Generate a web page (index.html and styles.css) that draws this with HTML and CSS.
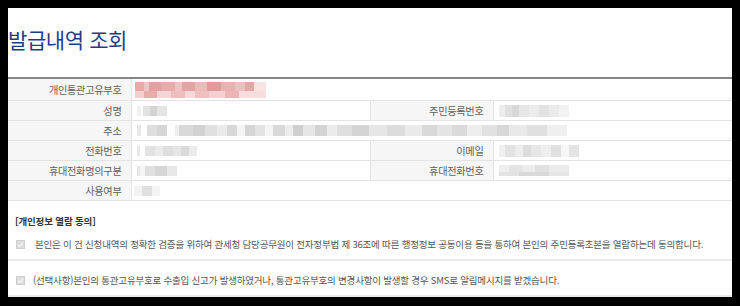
FILE: index.html
```html
<!DOCTYPE html>
<html lang="ko">
<head>
<meta charset="utf-8">
<title>발급내역 조회</title>
<link rel="stylesheet" href="styles.css">
</head>
<body>
<div class="page">
  <h1 class="title">발급내역 조회</h1>
  <table class="info">
    <colgroup>
      <col class="c-label"><col class="c-value"><col class="c-label"><col class="c-value">
    </colgroup>
    <tr class="first">
      <th>개인통관고유부호</th>
      <td colspan="3"><span class="blur b-id"></span></td>
    </tr>
    <tr>
      <th>성명</th>
      <td><span class="blur b-name"></span></td>
      <th>주민등록번호</th>
      <td><span class="blur b-rrn"></span></td>
    </tr>
    <tr>
      <th>주소</th>
      <td colspan="3"><span class="blur b-addr"></span></td>
    </tr>
    <tr>
      <th>전화번호</th>
      <td><span class="blur b-tel"></span></td>
      <th>이메일</th>
      <td><span class="blur b-mail"></span></td>
    </tr>
    <tr>
      <th>휴대전화명의구분</th>
      <td><span class="blur b-owner"></span></td>
      <th>휴대전화번호</th>
      <td><span class="blur b-mobile"></span></td>
    </tr>
    <tr>
      <th>사용여부</th>
      <td colspan="3"><span class="blur b-use"></span></td>
    </tr>
  </table>

  <div class="consent">
    <div class="consent-title">[개인정보 열람 동의]</div>
    <div class="consent-item item-1">
      <svg class="chk" width="9" height="9" viewBox="0 0 9 9" aria-hidden="true">
        <rect x="0.5" y="0.5" width="8" height="8" fill="#dedede" stroke="#cfcfcf"/>
        <path d="M2 4.6 L3.8 6.4 L7 2.6" fill="none" stroke="#f7f7f7" stroke-width="1.3"/>
      </svg>
      <span class="consent-text">본인은 이 건 신청내역의 정확한 검증을 위하여 관세청 담당공무원이 전자정부법 제 36조에 따른 행정정보 공동이용 등을 통하여 본인의 주민등록초본을 열람하는데 동의합니다.</span>
    </div>
    <div class="consent-item item-2">
      <svg class="chk" width="9" height="9" viewBox="0 0 9 9" aria-hidden="true">
        <rect x="0.5" y="0.5" width="8" height="8" fill="#dedede" stroke="#cfcfcf"/>
        <path d="M2 4.6 L3.8 6.4 L7 2.6" fill="none" stroke="#f7f7f7" stroke-width="1.3"/>
      </svg>
      <span class="consent-text">(선택사항)본인의 통관고유부호로 수출입 신고가 발생하였거나, 통관고유부호의 변경사항이 발생할 경우 SMS로 알림메시지를 받겠습니다.</span>
    </div>
  </div>
</div>
</body>
</html>
```

FILE: styles.css
```css
html, body {
  margin: 0;
  padding: 0;
  background: #000;
}

body {
  padding: 8px 8px 9px 8px;
  font-family: "Noto Sans CJK KR", "Noto Sans", sans-serif;
}

.page {
  width: 724px;
  height: 289px;
  background: #fff;
  overflow: hidden;
}

.title {
  margin: 0;
  padding: 16px 0 23px 0;
  height: 30px;
  line-height: 30px;
  font-size: 21px;
  font-weight: 400;
  letter-spacing: -0.4px;
  color: #1f3d87;
  white-space: nowrap;
}

.info {
  width: 724px;
  table-layout: fixed;
  border-collapse: collapse;
  border-top: 2px solid #868686;
}

.c-label { width: 123px; }
.c-value { width: 239px; }

.info th,
.info td {
  height: 19px;
  padding: 0;
  border-bottom: 1px solid #e4e4e4;
  vertical-align: middle;
}

.info tr.first th,
.info tr.first td {
  height: 21px;
}

.info th {
  background: #f6f6f6;
  border-right: 1px solid #e4e4e4;
  text-align: right;
  padding-right: 9px;
  font-size: 10.2px;
  font-weight: 400;
  letter-spacing: -0.3px;
  color: #5f5f5f;
  white-space: nowrap;
}

.info td {
  padding-left: 5px;
  border-right: 1px solid #e4e4e4;
}

.info td:last-child {
  border-right: none;
}

.blur {
  display: block;
  height: 10px;
}

.b-id {
  width: 131px;
  height: 16px;
  margin-left: -2px;
  background:
    linear-gradient(90deg, #eaa8a8 0 9px, #f1c5c5 9px 14px, #e6a0a0 14px 26px, #e9abab 26px 40px, #f0c2c2 40px 47px, #e7a3a3 47px 60px, #eeb9b9 60px 72px, #e39a9a 72px 86px, #ebb0b0 86px 100px, #f0c0c0 100px 110px, #e8a5a5 110px 119px, #f8e3e3 119px 131px) top / 100% 9px no-repeat,
    linear-gradient(90deg, #f3cfcf 0 9px, #e9acac 9px 22px, #f5d6d6 22px 36px, #eebdbd 36px 50px, #f6d9d9 50px 60px, #efc0c0 60px 74px, #f4d0d0 74px 90px, #ecb6b6 90px 104px, #f7dddd 104px 131px) bottom / 100% 7px no-repeat;
}

.b-name {
  width: 30px;
  background: linear-gradient(90deg, #f1f1f1 0 4px, #fff 4px 6px, #e2e2e2 6px 13px, #d3d3d3 13px 20px, #e4e4e4 20px 30px);
}

.b-rrn {
  width: 70px;
  height: 12px;
  background: linear-gradient(90deg, #eeeeee 0 6px, #e0e0e0 6px 13px, #d8d8d8 13px 20px, #e6e6e6 20px 30px, #ececec 30px 40px, #e2e2e2 40px 50px, #eaeaea 50px 60px, #f2f2f2 60px 70px);
}

.b-addr {
  width: 430px;
  height: 11px;
  background: linear-gradient(90deg, #e8e8e8 0 4px, #fff 4px 10px, #dedede 10px 20px, #d6d6d6 20px 30px, #fff 30px 38px, #eeeeee 38px 42px, #d9d9d9 42px 56px, #d2d2d2 56px 68px, #e0e0e0 68px 80px, #eaeaea 80px 90px, #d8d8d8 90px 100px, #f4f4f4 100px 108px, #d5d5d5 108px 118px, #e3e3e3 118px 128px, #f5f5f5 128px 136px, #d9d9d9 136px 148px, #ececec 148px 156px, #cfcfcf 156px 166px, #e6e6e6 166px 178px, #d3d3d3 178px 190px, #ebebeb 190px 200px, #dedede 200px 215px, #d4d4d4 215px 232px, #e6e6e6 232px 250px, #dcdcdc 250px 268px, #eaeaea 268px 285px, #d9d9d9 285px 300px, #e4e4e4 300px 315px, #dadada 315px 330px, #eeeeee 330px 345px, #e1e1e1 345px 360px, #d7d7d7 360px 372px, #e9e9e9 372px 390px, #e0e0e0 390px 410px, #efefef 410px 430px);
}

.b-tel {
  width: 60px;
  background: linear-gradient(90deg, #e8e8e8 0 3px, #fff 3px 8px, #e2e2e2 8px 18px, #ebebeb 18px 26px, #dedede 26px 36px, #e6e6e6 36px 44px, #dadada 44px 52px, #ececec 52px 60px);
}

.b-mail {
  width: 80px;
  height: 12px;
  background: linear-gradient(90deg, #f0f0f0 0 6px, #e2e2e2 6px 16px, #ececec 16px 24px, #dcdcdc 24px 32px, #e6e6e6 32px 42px, #eeeeee 42px 52px, #e0e0e0 52px 62px, #f6f6f6 62px 70px, #e4e4e4 70px 80px);
}

.b-owner {
  width: 40px;
  background: linear-gradient(90deg, #e6e6e6 0 3px, #f4f4f4 3px 8px, #e0e0e0 8px 18px, #d6d6d6 18px 30px, #e8e8e8 30px 40px);
}

.b-mobile {
  width: 70px;
  height: 11px;
  background:
    linear-gradient(90deg, #eeeeee 0 10px, #e4e4e4 10px 24px, #ececec 24px 36px, #e0e0e0 36px 50px, #ebebeb 50px 70px) top / 100% 7px no-repeat,
    linear-gradient(90deg, #e2e2e2 0 20px, #d8d8d8 20px 50px, #e6e6e6 50px 70px) bottom / 100% 4px no-repeat;
}

.b-use {
  width: 26px;
  margin-left: -3px;
  background: linear-gradient(90deg, #f2f2f2 0 8px, #e0e0e0 8px 18px, #f4f4f4 18px 26px);
}

.consent {
  padding-top: 14px;
}

.consent-title {
  padding-left: 7px;
  height: 12px;
  line-height: 12px;
  font-size: 9.5px;
  font-weight: 700;
  letter-spacing: -0.15px;
  color: #333;
  white-space: nowrap;
}

.consent-item {
  display: flex;
  align-items: center;
  gap: 10px;
  padding: 11px 0 9px 8px;
  line-height: 12px;
  border-bottom: 2px solid #e9e9e9;
  white-space: nowrap;
}

.consent-item.item-2 {
  padding-top: 13px;
  gap: 8px;
}

.chk {
  display: block;
  flex: none;
}

.consent-text {
  font-size: 9.5px;
  letter-spacing: -0.2px;
  color: #555;
}
```
